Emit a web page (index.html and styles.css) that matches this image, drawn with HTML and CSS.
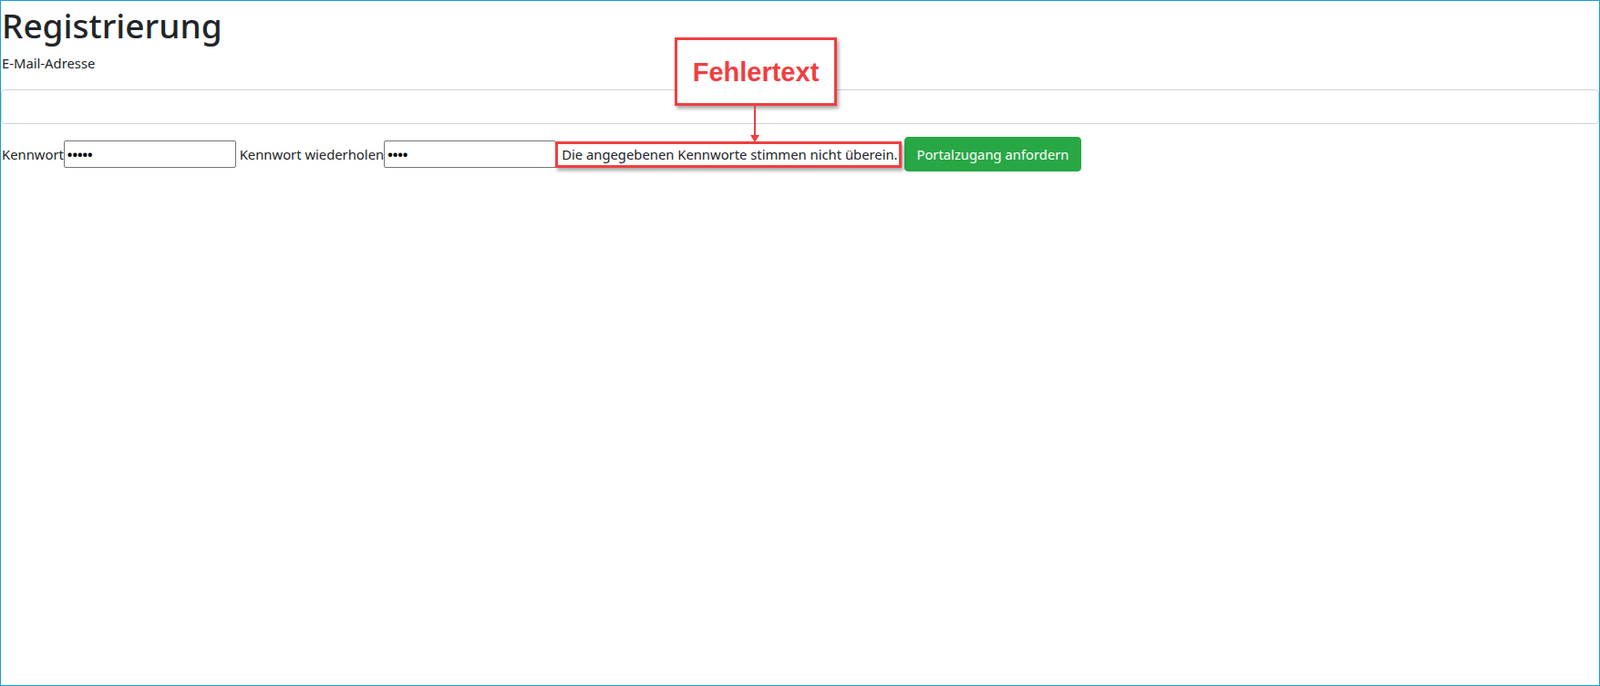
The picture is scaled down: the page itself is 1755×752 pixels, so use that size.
FILE: index.html
```
<!DOCTYPE html>
<html lang="de">
<head>
    <meta charset="UTF-8">
    <title>Registrierung</title>
    <link rel="stylesheet" href="styles.css">
</head>
<body>
    <div class="frame">
        <h1>Registrierung</h1>
        <label class="block-label" for="email">E-Mail-Adresse</label>
        <input class="form-control" type="email" id="email">

        <div class="pw-row">
            <label for="pw1">Kennwort</label><input class="pw" type="password" id="pw1" value="12345"> <label for="pw2">Kennwort wiederholen</label><input class="pw" type="password" id="pw2" value="1234"><span class="error">Die angegebenen Kennworte stimmen nicht überein.</span> <button class="btn-success">Portalzugang anfordern</button>
        </div>

        <!-- annotation -->
        <div class="callout">Fehlertext</div>
        <div class="callout-line"></div>
    </div>
</body>
</html>
```

FILE: styles.css
```
html, body {
    margin: 0;
    padding: 0;
}

body {
    font-family: "Noto Sans", "Open Sans", sans-serif;
    font-size: 14.8px;
    line-height: 24px;
    color: #212529;
    background: #fff;
}

.frame {
    position: relative;
    box-sizing: border-box;
    width: 1755px;
    height: 752px;
    border: 1px solid #12a0dc;
    padding: 0;
    overflow: hidden;
}

h1 {
    font-size: 37px;
    font-weight: 500;
    line-height: 48px;
    padding-top: 3px;
    margin: 0 0 5px 1px;
}

.block-label {
    display: block;
    margin: 0 0 17px 1px;
}

.form-control {
    display: block;
    box-sizing: border-box;
    width: 100%;
    height: 38px;
    padding: 6px 12px;
    border: 1px solid #ced4da;
    border-radius: 4px;
    font: inherit;
    margin: 0;
}

.pw-row {
    margin-top: 14px;
    padding-left: 1px;
    white-space: nowrap;
}

.pw {
    box-sizing: border-box;
    width: 189px;
    height: 30px;
    padding: 1px 3px;
    border: 1px solid #767676;
    border-radius: 2px;
    font: inherit;
    font-weight: bold;
    margin: 0;
    vertical-align: baseline;
}

.error {
    display: inline-block;
    position: relative;
    padding: 0 4px 0 6px;
}

.error::after {
    content: "";
    position: absolute;
    left: -1px;
    top: -2px;
    right: 0;
    bottom: -3px;
    border: 3px solid #ef3f41;
    box-shadow: 2px 3px 4px rgba(0, 0, 0, 0.35);
}

.btn-success {
    display: inline-block;
    box-sizing: border-box;
    height: 38px;
    padding: 6px 12px;
    border: 1px solid #28a745;
    border-radius: 4px;
    background: #28a745;
    color: #fff;
    font: inherit;
    margin: 0;
}

.callout {
    position: absolute;
    left: 739px;
    top: 40px;
    box-sizing: border-box;
    width: 178px;
    height: 75px;
    border: 3px solid #ef3f41;
    background: #fff;
    box-shadow: 2px 3px 4px rgba(0, 0, 0, 0.35);
    color: #ef3f41;
    font-family: "Liberation Sans", Arial, sans-serif;
    font-weight: bold;
    font-size: 29px;
    line-height: 1;
    display: flex;
    align-items: center;
    justify-content: center;
    padding-top: 2px;
}

.callout-line {
    position: absolute;
    left: 826px;
    top: 114px;
    width: 2px;
    height: 35px;
    background: #ef3f41;
}

.callout-line::after {
    content: "";
    position: absolute;
    left: -4px;
    bottom: -6px;
    border-left: 5px solid transparent;
    border-right: 5px solid transparent;
    border-top: 8px solid #ef3f41;
}
```
